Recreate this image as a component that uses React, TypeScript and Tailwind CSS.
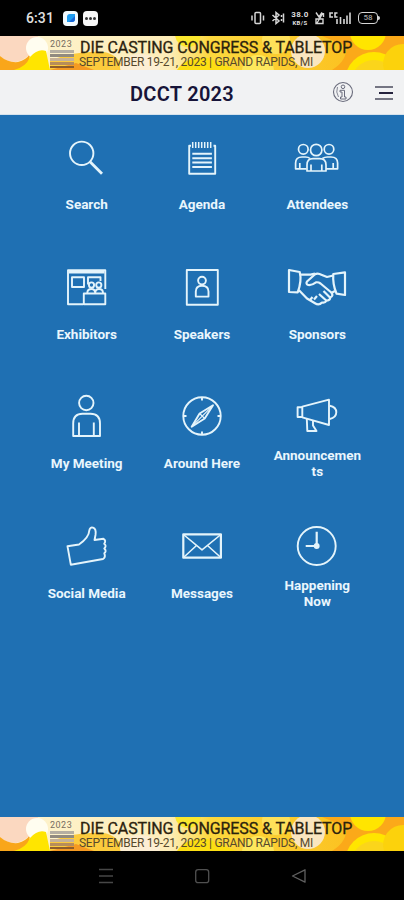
import React from 'react';

// Shared frame for the menu icons
const MenuIcon = ({ children }: { children: React.ReactNode }) => (
  <svg
    viewBox="0 0 64 44"
    className="h-11 w-16"
    fill="none"
    stroke="#e4f4fb"
    strokeWidth="1.9"
    strokeLinejoin="round"
  >
    {children}
  </svg>
);

const SearchIcon = () => (
  <MenuIcon>
    <circle cx="26.7" cy="18.3" r="11.7" />
    <path d="M35 26.7 L47 38.8" strokeWidth="2.8" />
  </MenuIcon>
);

const AgendaIcon = () => (
  <MenuIcon>
    <path d="M21 10.8 H19.2 V38.7 H45.2 V10.8 H43.5" />
    <path d="M22.7 7 v6 M25.7 7 v6 M28.7 7 v6 M31.7 7 v6 M34.7 7 v6 M37.7 7 v6 M40.7 7 v6" strokeWidth="1.5" />
    <path d="M22.3 18.8 h19.6 M22.3 23.2 h19.6 M22.3 27.6 h19.6 M22.3 32 h19.6" strokeWidth="2" />
  </MenuIcon>
);

const AttendeesIcon = () => (
  <MenuIcon>
    <g strokeWidth="1.7">
      <circle cx="18.3" cy="14.3" r="4.8" />
      <circle cx="44" cy="14.3" r="4.8" />
      <circle cx="31.2" cy="15" r="5.7" />
      <path d="M21.5 33.8 H10.6 V28 Q10.6 22 17 22 H20.5 Q23.5 22 25 23.5 M14.8 28 V33.8" />
      <path d="M41 33.8 H52.6 V28 Q52.6 22 46 22 H42.5 Q39.5 22 37.5 23.5 M48.2 28 V33.8" />
      <path d="M22 36 V30 Q22 23.7 28 23.7 H34.5 Q41 23.7 41 30 V36 Z M26 29.5 V36 M36.8 29.5 V36" />
    </g>
  </MenuIcon>
);

const ExhibitorsIcon = () => (
  <MenuIcon>
    <path d="M28 39.3 H13 V5.3 H50.3 V24" />
    <path d="M14 7.2 H49.5" strokeWidth="2.6" />
    <rect x="17" y="12.2" width="12" height="9.8" />
    <path d="M33 19.5 V12.2 H45.5 V16" />
    <circle cx="36.5" cy="20" r="2.6" />
    <circle cx="43.8" cy="20" r="2.6" />
    <path d="M32.3 28 Q32.3 24 36.5 24 Q40 24 40.2 28 Q40.3 24 44 24 Q48 24 48 28" />
    <rect x="28.8" y="28.5" width="21.5" height="10.8" />
  </MenuIcon>
);

const SpeakersIcon = () => (
  <MenuIcon>
    <rect x="16.8" y="5" width="31" height="34.8" />
    <circle cx="32" cy="15.6" r="3.9" />
    <path d="M25.8 31.6 V26.5 Q25.8 20.8 32 20.8 Q38.5 20.8 38.5 26.5 V31.6 Z" />
  </MenuIcon>
);

const SponsorsIcon = () => (
  <MenuIcon>
    <g strokeWidth="2.2">
      <path d="M4 5 L14.7 7 Q17 16 12.7 27.3 L4 27 Z" />
      <path d="M60 7.3 L48.3 9 Q47.5 19 51.5 28.7 L60 30 Z" />
      <path d="M15.3 9.6 H25.5 L30 8.7" />
      <path d="M48.3 10.5 L42 12 L34.5 9 Q32 8 29.5 9.7 L22 16.5 Q20.5 19 23.3 20 Q26.5 20.5 31 17.3 Q33.5 17 35.5 18.5 L46.3 27.5 Q49 31 45 32.5 Q46 34.5 41.5 35.8 Q40 38.3 37 37.5 Q34 40.8 30 38.3 L22 33.5 L13.8 25" />
      <path d="M50 26 L46.3 28 M38.5 26 L45 32.5 M34 29 L41.5 35.8 M27.5 32 L25 35 M32 31 L29 34.5" />
    </g>
  </MenuIcon>
);

const MeetingIcon = () => (
  <MenuIcon>
    <circle cx="31.3" cy="9" r="7.2" />
    <path d="M18.2 42 V29.5 Q18.2 19.8 27.5 19.8 H35.5 Q45 19.8 45 29.5 V42 Z M24 28.5 V42 M38.8 28.5 V42" />
  </MenuIcon>
);

const AroundIcon = () => (
  <MenuIcon>
    <circle cx="32" cy="22" r="18.7" />
    <path d="M43 11.3 L34.7 24.5 L21.7 32.7 L29.6 19.5 Z" />
    <path d="M43 11.3 L21.7 32.7 M29.6 19.5 L34.7 24.5" strokeWidth="1.2" />
    <path d="M32 3 v3.5 M32 37.5 v3.5 M13 22 h3.5 M47.5 22 h3.5" />
  </MenuIcon>
);

const AnnouncementsIcon = () => (
  <MenuIcon>
    <path d="M17.3 12.7 L44 5.7 V31 L17.3 23.3 Z M17.3 13.3 H12.6 V23 H17.3" />
    <path d="M44.7 11.7 Q51.3 13 51.3 18.3 Q51.3 23.7 44.7 25" />
    <path d="M21.8 24.7 L22.3 37 H31.5 L28 31.5 V27" />
  </MenuIcon>
);

const SocialIcon = () => (
  <MenuIcon>
    <path d="M12.5 22.3 L24 20.5 Q34 13.5 34.3 6.5 Q35 2.7 38 3.7 Q41.5 5 40.5 11 L39.5 16 L48.5 14.8 Q51.5 16.5 49.2 19.7 Q52 22 49.3 24.5 Q52 27 49.3 29.3 Q51 33 48 35 L15.8 40.7 Z" />
  </MenuIcon>
);

const MessagesIcon = () => (
  <MenuIcon>
    <rect x="13.3" y="10.3" width="37.6" height="23.4" strokeWidth="2.2" />
    <path d="M14 11 L32 25.8 L50.3 11 M14 33 L26.5 21.5 M50.3 33 L37.5 21.5" strokeWidth="1.6" />
  </MenuIcon>
);

const HappeningIcon = () => (
  <MenuIcon>
    <circle cx="31.7" cy="22" r="19" />
    <path d="M31.7 7.7 V22 H20.7" strokeWidth="2.2" />
    <circle cx="31.7" cy="22" r="2" fill="#e4f4fb" />
  </MenuIcon>
);

const menuItems = [
  { label: 'Search', icon: SearchIcon },
  { label: 'Agenda', icon: AgendaIcon },
  { label: 'Attendees', icon: AttendeesIcon },
  { label: 'Exhibitors', icon: ExhibitorsIcon },
  { label: 'Speakers', icon: SpeakersIcon },
  { label: 'Sponsors', icon: SponsorsIcon },
  { label: 'My Meeting', icon: MeetingIcon },
  { label: 'Around Here', icon: AroundIcon },
  { label: 'Announcements', icon: AnnouncementsIcon },
  { label: 'Social Media', icon: SocialIcon },
  { label: 'Messages', icon: MessagesIcon },
  { label: 'Happening Now', icon: HappeningIcon },
];

const StatusBar = () => (
  <div className="flex h-9 shrink-0 items-center bg-black pl-[26px] pr-[24px] text-white">
    <span className="w-[37px] text-[14px] font-medium leading-none tracking-[0.1px] text-[#e0e0e0]">6:31</span>
    <span className="flex h-[15px] w-[15px] items-center justify-center rounded bg-[#f2fbff]">
      <svg viewBox="0 0 10 10" className="h-2.5 w-2.5">
        <path d="M1 4 Q1 1 4 1 H9 V6 Q9 9 6 9 H1 Z" fill="#1e9df0" />
        <path d="M3 9 L9 3 V6 Q9 9 6 9 Z" fill="#1765d8" />
      </svg>
    </span>
    <span className="ml-[5px] flex h-[15px] w-[15px] items-center justify-center gap-px rounded bg-[#f7f7f7]">
      <span className="h-[3px] w-[3px] rounded-full bg-[#333]" />
      <span className="h-[3px] w-[3px] rounded-full bg-[#333]" />
      <span className="h-[3px] w-[3px] rounded-full bg-[#333]" />
    </span>
    <div className="ml-auto flex items-center">
      <svg viewBox="0 0 34 14" className="h-3.5 w-[34px]" fill="none" stroke="#d5d5d5" strokeWidth="1.5">
        <rect x="4" y="1.5" width="5.5" height="11" rx="1" />
        <path d="M1 4.5 v5 M12.5 4.5 v5" />
        <path d="M21.5 4 L28 10 L25 12.5 V1.5 L28 4 L21.5 10 M30.5 4 v2 M30.5 8 v2 M32.5 2.5 v9" />
      </svg>
      <span className="ml-[5px] flex w-[20px] flex-col items-center gap-px text-[8px] font-bold leading-[8px] tracking-[0.4px] text-[#dedede]">
        <span>38.0</span>
        <span className="text-[6px] leading-[6px]">KB/S</span>
      </span>
      <svg viewBox="0 0 10 14" className="ml-[5px] h-3.5 w-2.5" fill="none" stroke="#d5d5d5" strokeWidth="1.4">
        <path d="M1 1.5 L4 6 L7 1.5 M1 8 h7 v4.5 h-7 Z M8.5 2 v4 M2 12 L8 2" />
      </svg>
      <svg viewBox="0 0 22 14" className="ml-[4px] h-3.5 w-[22px]" fill="none" stroke="#d5d5d5" strokeWidth="1.6">
        <path d="M4 2 H1 V6 H4 M8.5 2 H6 V6 H8.5 M8 8 V13 M11.5 6 V13 M15 8 V13 M18 4.5 V13 M21 1.5 V13" />
      </svg>
      <span className="ml-[7px] flex h-3 w-[20px] items-center justify-center rounded-[4px] border border-[#d5d5d5] text-[8px] font-medium leading-none text-[#a5a5a5]">
        58
      </span>
      <span className="h-1 w-[2px] rounded-r bg-[#d5d5d5]" />
    </div>
  </div>
);

const Banner = () => (
  <div className="relative h-[34px] shrink-0 overflow-hidden bg-[#fdeebb]">
    <svg viewBox="0 0 404 34" preserveAspectRatio="none" className="absolute inset-0 h-full w-full">
      <defs>
        <linearGradient id="sun" x1="0" x2="1" y1="0" y2="0">
          <stop offset="0" stopColor="#fdf3d0" />
          <stop offset="0.42" stopColor="#fdedb8" />
          <stop offset="0.52" stopColor="#fcd83e" />
          <stop offset="1" stopColor="#fbb915" />
        </linearGradient>
      </defs>
      <rect width="404" height="34" fill="url(#sun)" />
      <path d="M0 0 H38 Q34 22 16 26 Q6 26 0 20 Z" fill="#fbd8c0" />
      <path d="M0 20 Q8 27 18 26 Q26 24 30 18 L28 34 H0 Z" fill="#f9a61a" />
      <circle cx="37" cy="12" r="11" fill="#fffdf0" />
      <path d="M14 34 Q26 31 30 21 Q38 12 46 15 L50 34 Z" fill="#ffe500" />
      <path d="M50 34 V24 Q80 14 104 16 Q118 18 124 34 Z" fill="#fccb3d" />
      <path d="M50 34 L76 27 L94 34 Z" fill="#f59a22" />
      <ellipse cx="140" cy="31" rx="20" ry="13" fill="#fdeed3" />
      <circle cx="188" cy="-2" r="13" fill="#fbe72e" />
      <path d="M177 34 Q186 20 208 22 L236 34 Z" fill="#fddf13" />
      <circle cx="258" cy="35" r="16" fill="#fde75c" />
      <circle cx="276" cy="4" r="14" fill="#fde05a" />
      <circle cx="308" cy="15" r="17" fill="#fae6bf" />
      <path d="M322 0 H404 V34 H332 Q348 24 346 10 Z" fill="#fba919" />
      <circle cx="368" cy="-4" r="18" fill="#ffe500" />
      <circle cx="374" cy="45" r="29" fill="#ffe500" />
      <circle cx="374" cy="47" r="23" fill="#fbd51b" />
      <path d="M384 34 A20 20 0 0 1 404 8 V34 Z" fill="#fcd20c" />
    </svg>
    <div className="relative flex">
      <div className="ml-[50px] w-[24px] pt-[4px]">
        <div className="text-[9px] leading-[9px] tracking-[0.5px] text-[#756c61]">2023</div>
        <div className="mt-[1px] h-[3px] bg-[#b5afa2]" />
        <div className="mt-[1px] h-[3px] bg-[#918b80]" />
        <div className="mt-[1px] h-[3px] bg-[#c5b198]" />
        <div className="mt-[1px] h-[3px] bg-[#b78d5a]" />
        <div className="mt-[1px] h-[2px] bg-[#8d5d2c]" />
      </div>
      <div className="ml-[6px] whitespace-nowrap pt-[4px] text-[#2a220d]">
        <div className="text-[16px] leading-[16px] tracking-[-0.1px] [-webkit-text-stroke:0.3px_#2a220d]">DIE CASTING CONGRESS &amp; TABLETOP</div>
        <div className="-ml-px pt-px text-[12px] leading-[11px] tracking-[-0.28px] text-[#57492c]">SEPTEMBER 19-21, 2023 | GRAND RAPIDS, MI</div>
      </div>
    </div>
  </div>
);

const Header = () => (
  <header className="flex h-[45px] shrink-0 items-center border-b border-[#d5e2ec] bg-[#f1f2f3]">
    <h1 className="ml-[130px] pt-[3px] text-[20px] font-semibold leading-none tracking-[0.3px] text-[#171439]">DCCT 2023</h1>
    <svg viewBox="0 0 22 22" className="ml-auto h-[22px] w-[22px]" fill="none" stroke="#6a6c7c">
      <circle cx="11" cy="11" r="9.5" strokeWidth="1.1" />
      <circle cx="11" cy="5.8" r="1.8" />
      <path d="M8 9.3 H12.5 V16 H14 V18 H8.5 V16 H10 V11 H8 Z" />
      <path d="M5.5 6 Q3.5 11 6.5 16" strokeWidth="0.8" />
    </svg>
    <div className="ml-[21px] mr-[11px] flex w-[18px] flex-col items-end gap-[4px] pt-px">
      <span className="h-[2px] w-[18px] bg-[#747582]" />
      <span className="h-[2px] w-[14px] bg-[#25233d]" />
      <span className="h-[2px] w-[18px] bg-[#747582]" />
    </div>
  </header>
);

const NavigationBar = () => (
  <div className="flex h-[49px] shrink-0 items-center justify-center gap-[79px] bg-black">
    <svg viewBox="0 0 18 18" className="h-[18px] w-[18px]" stroke="#474747" strokeWidth="1.5">
      <path d="M3 2.5 h14 M3 9 h14 M3 15.5 h14" />
    </svg>
    <svg viewBox="0 0 18 18" className="h-[18px] w-[18px]" fill="none" stroke="#505050" strokeWidth="1.3">
      <rect x="2.7" y="2.7" width="13" height="13" rx="2.5" />
    </svg>
    <svg viewBox="0 0 18 18" className="h-[18px] w-[18px]" fill="none" stroke="#606060" strokeWidth="1.3" strokeLinejoin="round">
      <path d="M2.5 9 L15 2.8 V15.2 Z" />
    </svg>
  </div>
);

export default function App() {
  return (
    <div className="flex h-[900px] w-full flex-col overflow-hidden bg-[#1f70b3] font-['Roboto',sans-serif]">
      <StatusBar />
      <Banner />
      <Header />
      <main className="grid flex-1 auto-rows-[129.5px] grid-cols-3 content-start pl-[29px] pr-[29px] pt-5">
        {menuItems.map(({ label, icon: ItemIcon }) => (
          <button key={label} className="flex flex-col items-center">
            <ItemIcon />
            <span className="mt-[9px] flex h-8 w-[90px] items-center justify-center text-center text-[13.5px] font-bold leading-4 tracking-[-0.02px] text-[#e9f6fd]">
              <span className="w-full wrap-break-word">{label}</span>
            </span>
          </button>
        ))}
      </main>
      <Banner />
      <NavigationBar />
    </div>
  );
}
